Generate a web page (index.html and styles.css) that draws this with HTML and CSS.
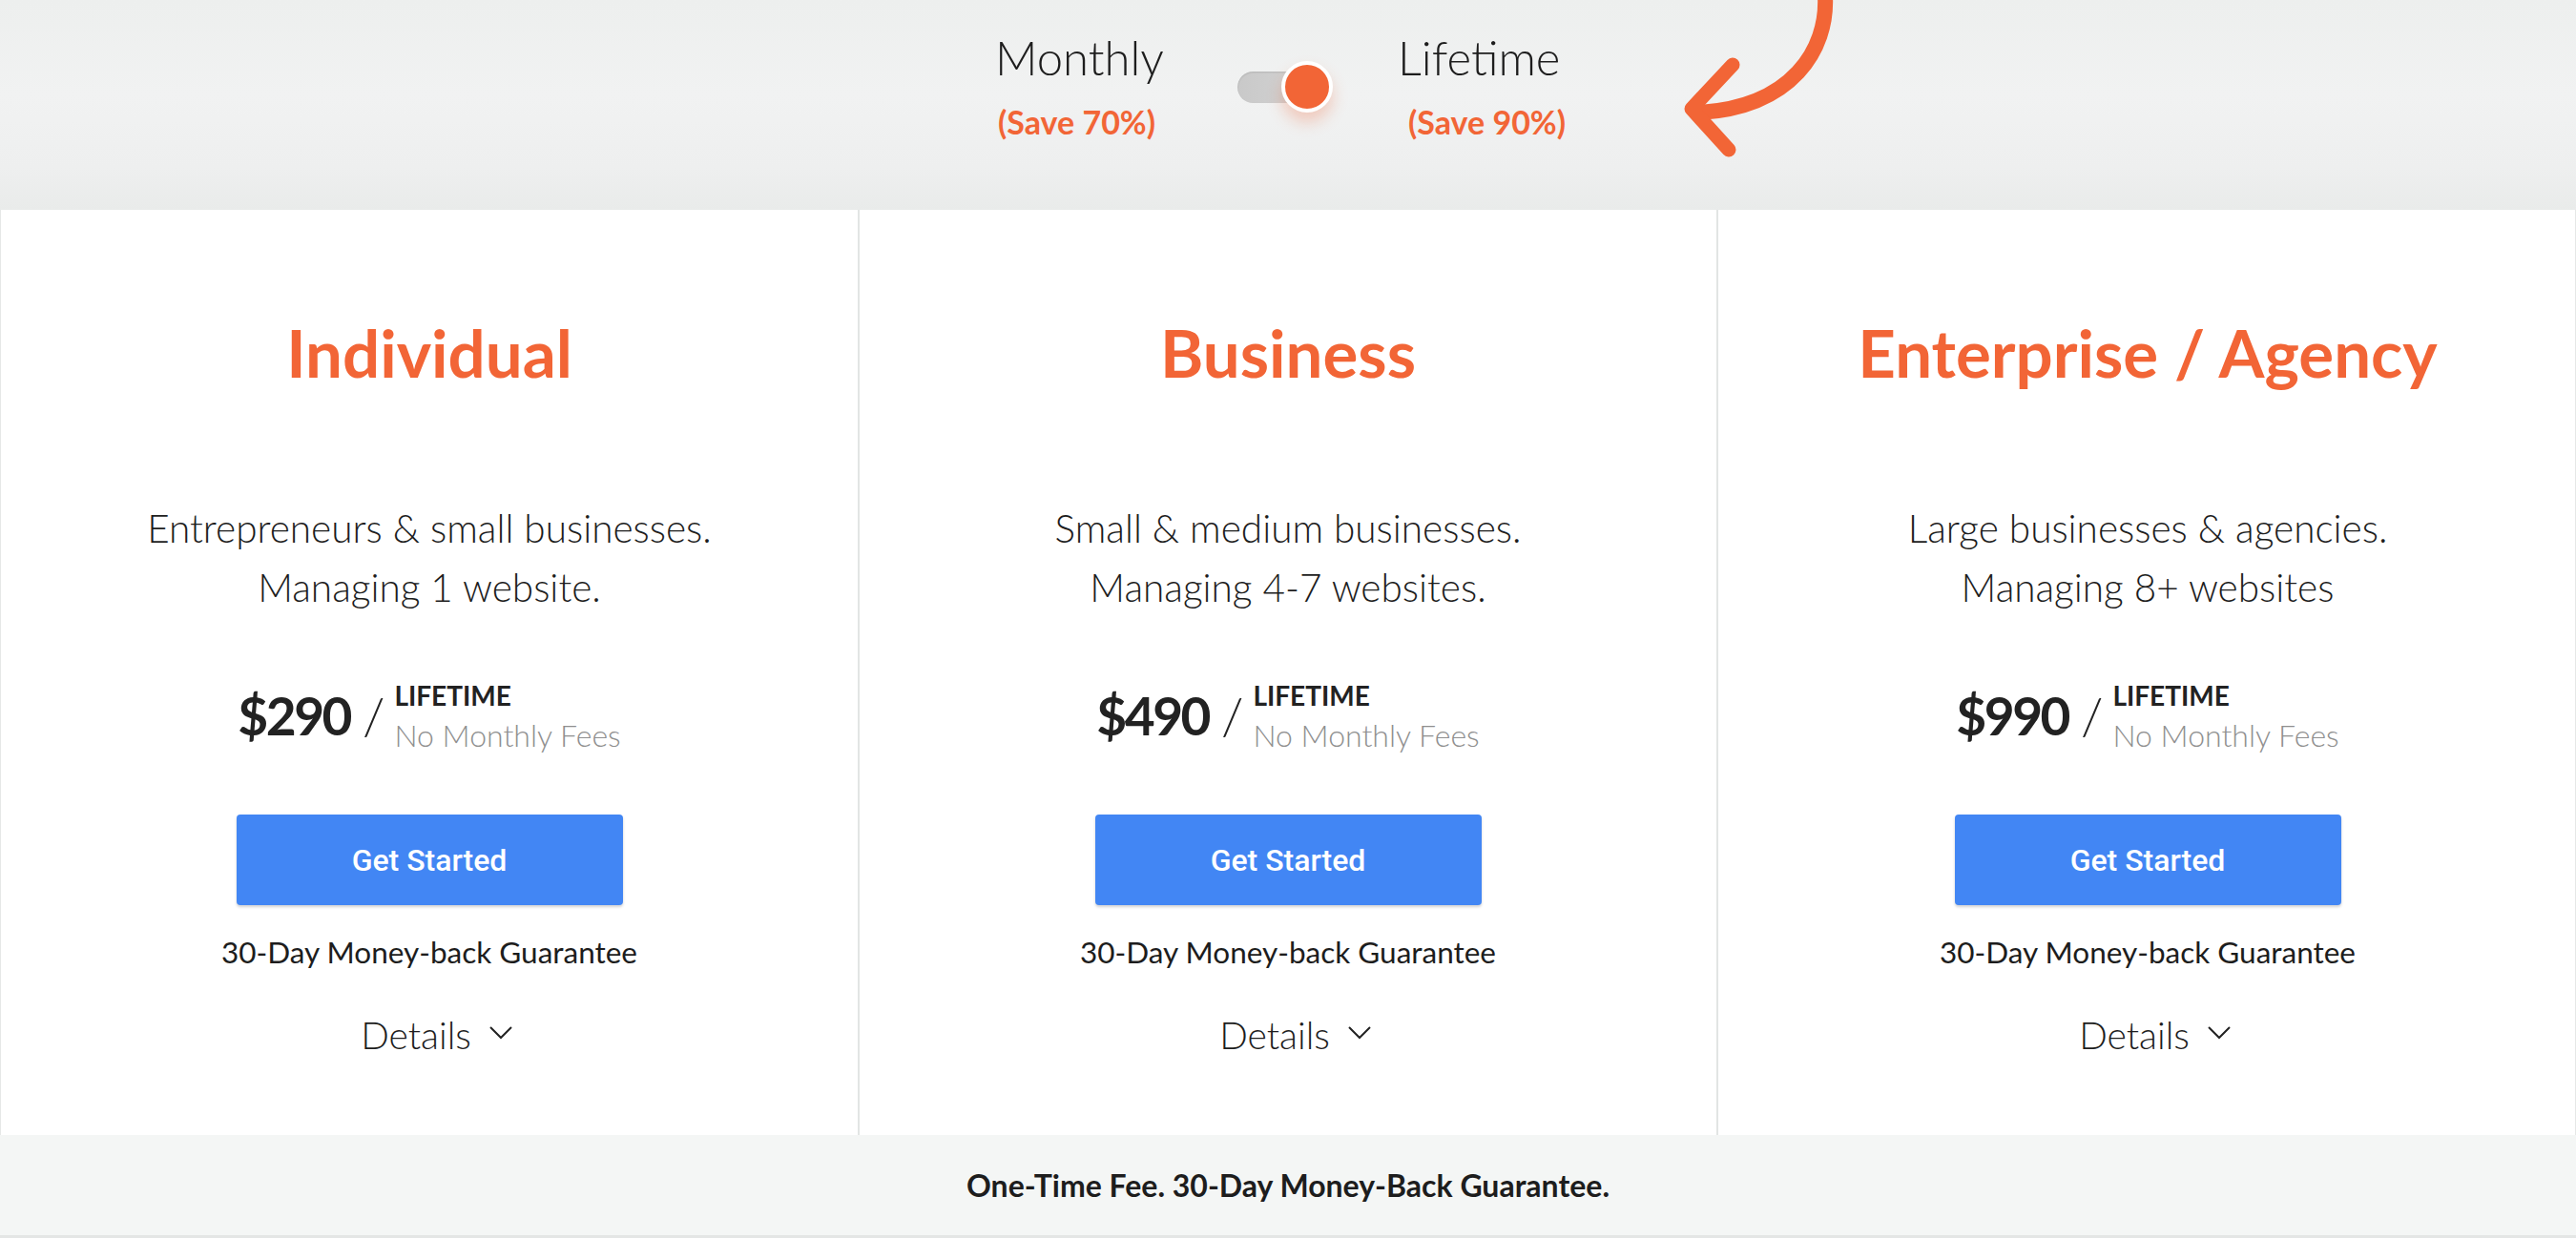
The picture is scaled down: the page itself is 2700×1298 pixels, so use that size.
FILE: index.html
```html
<!DOCTYPE html>
<html lang="en">
<head>
<meta charset="utf-8">
<title>Pricing</title>
<link rel="stylesheet" href="styles.css">
</head>
<body>
<header class="hero">
  <div class="toggle-group">
    <div class="plan-opt plan-opt--monthly">
      <span class="opt-label">Monthly</span>
      <span class="opt-save">(Save 70%)</span>
    </div>
    <div class="switch">
      <span class="switch-track"></span>
      <span class="switch-knob"></span>
    </div>
    <div class="plan-opt plan-opt--lifetime">
      <span class="opt-label">Lifetime</span>
      <span class="opt-save">(Save 90%)</span>
    </div>
  </div>
  <svg class="hero-arrow" width="200" height="180" viewBox="0 0 200 180" aria-hidden="true">
    <path d="M173,-4 C176,52 138,112 42,118" fill="none" stroke="#f26536" stroke-width="16" stroke-linecap="round"/>
    <path d="M76,68 L33,114 L72,157" fill="none" stroke="#f26536" stroke-width="15" stroke-linecap="round" stroke-linejoin="round"/>
  </svg>
</header>

<main class="plans">
  <section class="plan">
    <h2 class="plan-title">Individual</h2>
    <p class="plan-desc">Entrepreneurs &amp; small businesses.<br>Managing 1 website.</p>
    <div class="price-row">
      <span class="price">$290</span>
      <span class="price-slash">/</span>
      <span class="price-meta">
        <span class="price-term">LIFETIME</span>
        <span class="price-note">No Monthly Fees</span>
      </span>
    </div>
    <a class="btn" href="#">Get Started</a>
    <p class="guarantee">30-Day Money-back Guarantee</p>
    <div class="details">
      <span>Details</span>
      <svg class="chev" width="26" height="16" viewBox="0 0 26 16" aria-hidden="true"><path d="M2,2 L13,13 L24,2" fill="none" stroke="#222" stroke-width="2"/></svg>
    </div>
  </section>

  <section class="plan">
    <h2 class="plan-title">Business</h2>
    <p class="plan-desc">Small &amp; medium businesses.<br>Managing 4-7 websites.</p>
    <div class="price-row">
      <span class="price">$490</span>
      <span class="price-slash">/</span>
      <span class="price-meta">
        <span class="price-term">LIFETIME</span>
        <span class="price-note">No Monthly Fees</span>
      </span>
    </div>
    <a class="btn" href="#">Get Started</a>
    <p class="guarantee">30-Day Money-back Guarantee</p>
    <div class="details">
      <span>Details</span>
      <svg class="chev" width="26" height="16" viewBox="0 0 26 16" aria-hidden="true"><path d="M2,2 L13,13 L24,2" fill="none" stroke="#222" stroke-width="2"/></svg>
    </div>
  </section>

  <section class="plan">
    <h2 class="plan-title">Enterprise / Agency</h2>
    <p class="plan-desc">Large businesses &amp; agencies.<br>Managing 8+ websites</p>
    <div class="price-row">
      <span class="price">$990</span>
      <span class="price-slash">/</span>
      <span class="price-meta">
        <span class="price-term">LIFETIME</span>
        <span class="price-note">No Monthly Fees</span>
      </span>
    </div>
    <a class="btn" href="#">Get Started</a>
    <p class="guarantee">30-Day Money-back Guarantee</p>
    <div class="details">
      <span>Details</span>
      <svg class="chev" width="26" height="16" viewBox="0 0 26 16" aria-hidden="true"><path d="M2,2 L13,13 L24,2" fill="none" stroke="#222" stroke-width="2"/></svg>
    </div>
  </section>
</main>

<footer class="footer">
  <p class="footer-text">One-Time Fee. 30-Day Money-Back Guarantee.</p>
</footer>
</body>
</html>
```

FILE: styles.css
```css
* { box-sizing: border-box; }

html, body {
  margin: 0;
  padding: 0;
}

body {
  width: 2700px;
  height: 1298px;
  overflow: hidden;
  background: #ffffff;
  font-family: Lato, "Noto Sans", sans-serif;
  color: #222222;
}

/* ---------- hero / toggle ---------- */
.hero {
  position: relative;
  height: 220px;
  background: linear-gradient(180deg, #edefee 0%, #f1f2f2 45%, #eeefef 80%, #e9ebea 100%);
  display: flex;
  justify-content: center;
  padding-top: 29px;
}

.toggle-group {
  display: flex;
  align-items: flex-start;
  margin-left: -10px;
}

.plan-opt {
  display: flex;
  flex-direction: column;
  align-items: flex-start;
}

.plan-opt--monthly { width: 176px; }
.plan-opt--lifetime { width: 182px; }

.opt-label {
  font-size: 49px;
  line-height: 62px;
  font-weight: 300;
  color: #1d1d1d;
}

.opt-save {
  margin-top: 17px;
  font-size: 34px;
  line-height: 40px;
  font-weight: 700;
  color: #f26536;
}

.plan-opt--monthly .opt-save { margin-left: 3px; }
.plan-opt--lifetime .opt-save { margin-left: 11px; }

.switch {
  position: relative;
  width: 100px;
  height: 54px;
  margin: 35px 68px 0 78px;
}

.switch-track {
  position: absolute;
  left: 0;
  top: 11px;
  width: 76px;
  height: 33px;
  border-radius: 17px;
  background: linear-gradient(90deg, #c9c9c9 0%, #d3d3d3 100%);
  box-shadow: inset 0 1px 2px rgba(0,0,0,0.12);
}

.switch-knob {
  position: absolute;
  right: 0;
  top: 0;
  width: 54px;
  height: 54px;
  border-radius: 50%;
  background: #f26536;
  border: 4px solid #ffffff;
  box-shadow: 0 10px 16px rgba(242, 101, 54, 0.28);
}

.hero-arrow {
  position: absolute;
  left: 1740px;
  top: 0;
}

/* ---------- plans ---------- */
.plans {
  display: grid;
  grid-template-columns: 900px 900px 900px;
  height: 970px;
  border-left: 1px solid #e6e8e7;
  border-right: 1px solid #e6e8e7;
}

.plan {
  display: flex;
  flex-direction: column;
  align-items: center;
  padding-top: 108px;
  border-right: 2px solid #e2e5e4;
}

.plan:last-child { border-right: none; }

.plan-title {
  margin: 0;
  font-size: 69px;
  line-height: 83px;
  font-weight: 700;
  color: #f26536;
}

.plan-desc {
  margin: 112px 0 0;
  font-size: 40.5px;
  line-height: 62px;
  font-weight: 300;
  text-align: center;
  color: #1d1d1d;
}

.price-row {
  margin-top: 61px;
  display: flex;
  align-items: center;
  height: 84px;
}

.price {
  font-size: 55px;
  line-height: 56px;
  font-weight: 700;
  letter-spacing: -2.5px;
  color: #222222;
}

.price-slash {
  font-size: 54px;
  line-height: 56px;
  font-weight: 300;
  margin: 0 10px 0 13px;
  color: #222222;
}

.price-meta {
  display: flex;
  flex-direction: column;
}

.price-term {
  font-size: 28px;
  line-height: 42px;
  font-weight: 700;
  color: #222222;
}

.price-note {
  font-size: 32px;
  line-height: 42px;
  font-weight: 300;
  color: #8f8f8f;
}

.btn {
  margin-top: 62px;
  width: 405px;
  height: 95px;
  display: flex;
  align-items: center;
  justify-content: center;
  background: #4286f4;
  border-radius: 4px;
  box-shadow: 0 2px 3px rgba(0, 0, 0, 0.18);
  color: #ffffff;
  text-decoration: none;
  font-family: Roboto, "Noto Sans", sans-serif;
  font-weight: 500;
  font-size: 32px;
}

.guarantee {
  margin: 30px 0 0;
  font-size: 31.5px;
  line-height: 38px;
  font-weight: 400;
  color: #1d1d1d;
}

.details {
  margin-top: 45px;
  margin-left: 16px;
  display: flex;
  align-items: center;
  gap: 18px;
  font-size: 39px;
  line-height: 47px;
  font-weight: 300;
  color: #1d1d1d;
}

.chev {
  display: block;
  margin-top: -6px;
}

/* ---------- footer ---------- */
.footer {
  height: 108px;
  background: #f4f6f5;
  border-bottom: 3px solid #e4e6e5;
  display: flex;
  align-items: center;
  justify-content: center;
}

.footer-text {
  margin: 0;
  font-size: 32px;
  line-height: 38px;
  font-weight: 700;
  color: #1d1d1d;
}
```
